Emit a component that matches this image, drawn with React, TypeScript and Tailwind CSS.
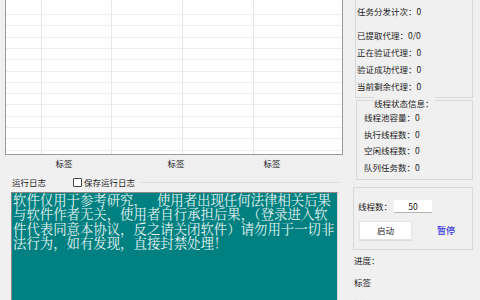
export default function App() {
  const hLines = Array.from({ length: 13 }, (_, i) => 14 + i * 11.3);
  const vLines = [35.5, 105.5, 176.5, 247.5];
  return (
    <div className="w-[480px] h-[300px] overflow-hidden bg-[#f0f0f0] flex font-['Noto_Sans_CJK_SC',sans-serif] text-[8.5px] text-[#222222]">
      {/* left column */}
      <div className="ml-[5px] w-[338px] shrink-0 flex flex-col">
        <div className="h-[155px] shrink-0 bg-white border-x border-b border-[#9a9a9a]">
          <svg width="336" height="154" className="block">
            {hLines.map((y) => (
              <line key={y} x1="0" x2="336" y1={Math.round(y) + 0.5} y2={Math.round(y) + 0.5} stroke="#eeeeee" strokeWidth="1" />
            ))}
            {vLines.map((x) => (
              <line key={x} x1={x} x2={x} y1="0" y2="154" stroke="#e8e8e8" strokeWidth="1" />
            ))}
          </svg>
        </div>
        <div className="h-[17px] shrink-0 flex leading-[17px]">
          <div className="w-[118px] text-center">标签</div>
          <div className="w-[106px] text-center">标签</div>
          <div className="w-[86px] text-center">标签</div>
        </div>
        <div className="mt-[4px] h-[12px] shrink-0 flex items-center leading-[12px]">
          <span className="ml-[7px]">运行日志</span>
          <span className="ml-[27px] w-[9px] h-[9px] bg-white border border-[#444444] rounded-[1px] shrink-0"></span>
          <span className="ml-[2px]">保存运行日志</span>
          <div className="ml-[6px] mr-[4px] flex-1 border-t border-[#dcdcdc]"></div>
        </div>
        <div className="mt-[4px] ml-[6px] w-[327px] flex-1 min-h-[120px] bg-[#008080] border-t border-l border-[#8a8a8a] border-r border-r-[#d8d8d8] pl-[1px] font-['Noto_Serif_CJK_SC','Noto_Sans_CJK_SC',serif] text-[13.4px] leading-[14.3px] text-[#e6f3f1] whitespace-nowrap">
          <div>软件仅用于参考研究，<span className="inline-block w-[10px]"></span>使用者出现任何法律相关后果</div>
          <div>与软件作者无关，使用者自行承担后果，（登录进入软</div>
          <div>件代表同意本协议，反之请关闭软件）请勿用于一切非</div>
          <div>法行为，如有发现，直接封禁处理！</div>
        </div>
      </div>

      {/* right column */}
      <div className="flex-1 flex flex-col">
        <div className="ml-[12px] w-[118px] h-[98px] shrink-0 border-x border-b border-[#d8d8d8] pl-[1px] pt-[3px] leading-[17px]">
          <div className="h-[17px]">任务分发计次：0</div>
          <div className="h-[7px]"></div>
          <div className="h-[17px]">已提取代理：0/0</div>
          <div className="h-[17px]">正在验证代理：0</div>
          <div className="h-[17px]">验证成功代理：0</div>
          <div className="h-[17px]">当前剩余代理：0</div>
        </div>
        <div className="mt-[2px] ml-[13px] w-[117px] shrink-0 border border-[#d8d8d8] pb-[4px]">
          <div className="-mt-[4px] ml-[17px] h-[12px] leading-[12px] w-fit bg-[#f0f0f0] pr-[1px]">线程状态信息：</div>
          <div className="pl-[7px] leading-[16.5px]">
            <div className="h-[16.5px]">线程池容量：0</div>
            <div className="h-[16.5px]">执行线程数：0</div>
            <div className="h-[16.5px]">空闲线程数：0</div>
            <div className="h-[16.5px]">队列任务数：0</div>
          </div>
        </div>
        <div className="mt-[7px] ml-[10px] w-[120px] h-[63px] shrink-0 border border-[#d8d8d8] pl-[4px] pt-[12px]">
          <div className="flex items-center h-[13px]">
            <span className="leading-[13px]">线程数：</span>
            <div className="ml-[2px] w-[38px] h-[13px] bg-white border-b border-[#b4b4b4] text-center leading-[12px]">50</div>
          </div>
          <div className="mt-[8px] flex items-center">
            <div className="ml-[1px] w-[53px] h-[19px] bg-white border border-[#e4e4e4] shadow-[0_1px_1px_rgba(0,0,0,0.08)] flex items-center justify-center">启动</div>
            <span className="ml-[25px] text-[9px] text-[#3a3ae0] font-medium">暂停</span>
          </div>
        </div>
        <div className="mt-[4px] ml-[11px] h-[12px] leading-[12px] shrink-0">进度：</div>
        <div className="mt-[10px] ml-[11px] h-[12px] leading-[12px] shrink-0">标签</div>
        <div className="mt-[9px] ml-[11px] h-[12px] leading-[12px] shrink-0">标签</div>
      </div>
    </div>
  );
}
